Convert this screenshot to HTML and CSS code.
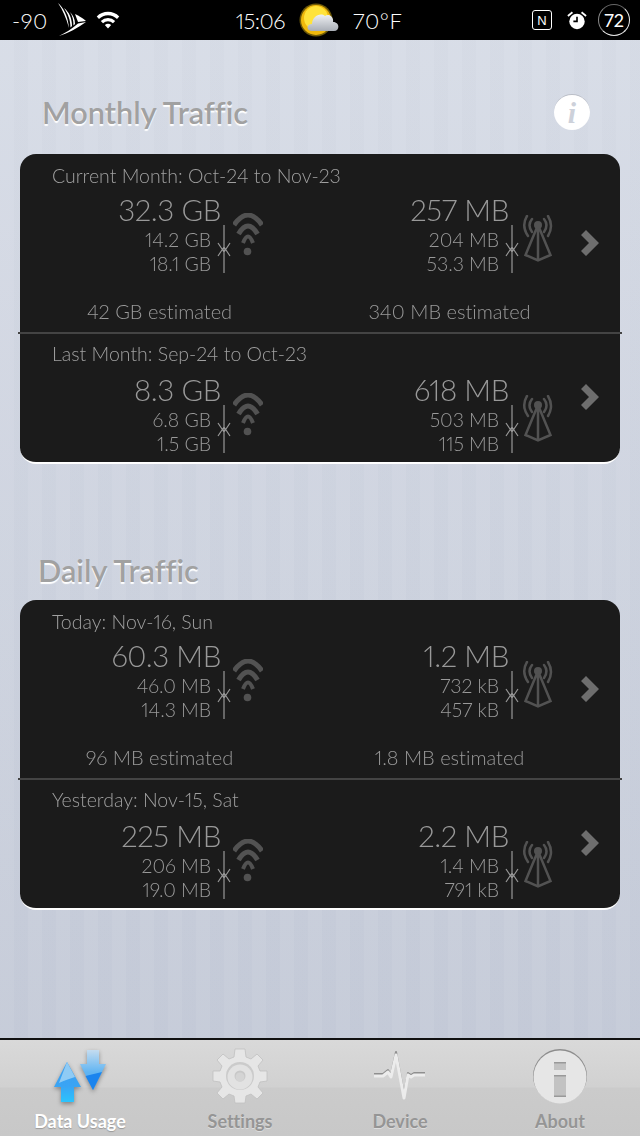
FILE: index.html
```html
<!doctype html>
<html lang="en">
<head>
<title>Data Usage</title>
<meta charset="utf-8">
<link rel="stylesheet" href="styles.css">
</head>
<body>
<svg class="defs" width="0" height="0">
  <symbol id="wifi" viewBox="0 0 30 43">
    <g fill="none" stroke-width="5">
      <path d="M1 12 Q15 -8 29 12"/>
      <path d="M5.500 21 Q15 5 24.500 21"/>
      <path d="M10 30 Q15 17 20 30" stroke-width="4"/>
    </g>
    <circle cx="14.500" cy="38.500" r="3.800" stroke="none"/>
  </symbol>
  <symbol id="tower" viewBox="0 0 31 47">
    <g fill="none" stroke-width="2.500" stroke-linecap="round">
      <path d="M10 4 Q5 10 10 17"/>
      <path d="M22 4 Q27 10 22 17"/>
      <path d="M5 1 Q-1 11 6 21"/>
      <path d="M26 1 Q32 11 26 21"/>
      <path d="M16 10 L3.500 40 L16 45.500 L28.500 40 Z M16 10 V45"/>
    </g>
    <circle cx="16" cy="10" r="4" stroke="none"/>
  </symbol>
  <symbol id="updown" viewBox="0 0 14 48">
    <path d="M7 0 V48 M1 18 L7 27 L13 18 M1 31 L7 22 L13 31" fill="none" stroke-width="1.200"/>
  </symbol>
  <symbol id="chevron" viewBox="0 0 18 26">
    <path d="M0 5 L5 0 L18 13 L5 26 L0 21 L8 13 Z"/>
  </symbol>
</svg>

<div class="status-bar">
  <div class="status-left">
    <span class="signal">-90</span>
    <svg class="sprint" viewBox="0 0 28 34">
      <path d="M0 0 C5 4 10 13 11 25 C8 15 5 7 0 0 Z"/>
      <path d="M6 5 C11 9 14 15 14 23 L12.500 24.500 C12.500 17 10 11 6 5 Z"/>
      <path d="M12 9 C15 12 17 16 17 21 L15.500 22.500 C15.500 17 14.500 13 12 9 Z"/>
      <path d="M17 11 L20 19 L28 18 C25 15 21 13 17 11 Z"/>
      <path d="M28 19 L20 20.500 C14 26 7 30 1 33 C10 30 20 25 28 19 Z"/>
    </svg>
    <svg class="wifi-status" viewBox="0 0 26 20"><path d="M0.500 6 A18 18 0 0 1 25.500 6 L23 9 A14 14 0 0 0 3 9 Z M5 11 A11.500 11.500 0 0 1 21 11 L18.500 13.500 A8 8 0 0 0 7.500 13.500 Z M9.500 15.500 A5.500 5.500 0 0 1 16.500 15.500 L13 19.500 Z"/></svg>
  </div>
  <div class="status-mid">
    <span class="time">15:06</span>
    <svg class="weather" viewBox="0 0 40 34">
      <defs>
        <linearGradient id="cloudFill" x1="0" y1="0" x2="0" y2="1"><stop offset="0" stop-color="#eef0f3"/><stop offset="1" stop-color="#a9aeb6"/></linearGradient>
      </defs>
      <circle cx="17" cy="17" r="16.500" fill="#6e5a08"/>
      <circle cx="17" cy="17" r="15" fill="#f0b90c"/>
      <circle cx="17" cy="15" r="12" fill="#ffe33a"/>
      <path d="M13 28 C7 28 7 21 13 21 C13 14 21 9 26 13 C30 10 35 14 34 19 C41 19 41 28 35 28 Z" fill="url(#cloudFill)"/>
    </svg>
    <span class="temp">70°F</span>
  </div>
  <div class="status-right">
    <span class="nfc">N</span>
    <svg class="alarm" viewBox="0 0 22 20">
      <circle cx="11" cy="11" r="8.500" fill="#fff"/>
      <path d="M1 5 L6 1 M21 5 L16 1" stroke="#fff" stroke-width="2"/>
      <path d="M11 6 V11 H7" fill="none" stroke="#000" stroke-width="1.800"/>
    </svg>
    <span class="battery">72</span>
  </div>
</div>

<main class="content">
  <section class="group group-monthly">
    <div class="group-head">
      <h2>Monthly Traffic</h2>
      <span class="info-btn">i</span>
    </div>
    <div class="card">
      <div class="row">
        <div class="row-title">Current Month: Oct-24 to Nov-23</div>
        <div class="stats">
          <div class="stat stat-wifi">
            <div class="values"><div class="total">32.3 GB</div><div>14.2 GB</div><div>18.1 GB</div></div>
            <svg class="updown"><use href="#updown"/></svg>
            <svg class="net wifi"><use href="#wifi"/></svg>
          </div>
          <div class="stat stat-cell">
            <div class="values"><div class="total">257 MB</div><div>204 MB</div><div>53.3 MB</div></div>
            <svg class="updown"><use href="#updown"/></svg>
            <svg class="net tower"><use href="#tower"/></svg>
          </div>
        </div>
        <div class="estimates"><span>42 GB estimated</span><span>340 MB estimated</span></div>
        <svg class="chevron"><use href="#chevron"/></svg>
      </div>
      <div class="row">
        <div class="row-title">Last Month: Sep-24 to Oct-23</div>
        <div class="stats">
          <div class="stat stat-wifi">
            <div class="values"><div class="total">8.3 GB</div><div>6.8 GB</div><div>1.5 GB</div></div>
            <svg class="updown"><use href="#updown"/></svg>
            <svg class="net wifi"><use href="#wifi"/></svg>
          </div>
          <div class="stat stat-cell">
            <div class="values"><div class="total">618 MB</div><div>503 MB</div><div>115 MB</div></div>
            <svg class="updown"><use href="#updown"/></svg>
            <svg class="net tower"><use href="#tower"/></svg>
          </div>
        </div>
        <svg class="chevron"><use href="#chevron"/></svg>
      </div>
    </div>
  </section>

  <section class="group group-daily">
    <div class="group-head">
      <h2>Daily Traffic</h2>
    </div>
    <div class="card">
      <div class="row">
        <div class="row-title">Today: Nov-16, Sun</div>
        <div class="stats">
          <div class="stat stat-wifi">
            <div class="values"><div class="total">60.3 MB</div><div>46.0 MB</div><div>14.3 MB</div></div>
            <svg class="updown"><use href="#updown"/></svg>
            <svg class="net wifi"><use href="#wifi"/></svg>
          </div>
          <div class="stat stat-cell">
            <div class="values"><div class="total">1.2 MB</div><div>732 kB</div><div>457 kB</div></div>
            <svg class="updown"><use href="#updown"/></svg>
            <svg class="net tower"><use href="#tower"/></svg>
          </div>
        </div>
        <div class="estimates"><span>96 MB estimated</span><span>1.8 MB estimated</span></div>
        <svg class="chevron"><use href="#chevron"/></svg>
      </div>
      <div class="row">
        <div class="row-title">Yesterday: Nov-15, Sat</div>
        <div class="stats">
          <div class="stat stat-wifi">
            <div class="values"><div class="total">225 MB</div><div>206 MB</div><div>19.0 MB</div></div>
            <svg class="updown"><use href="#updown"/></svg>
            <svg class="net wifi"><use href="#wifi"/></svg>
          </div>
          <div class="stat stat-cell">
            <div class="values"><div class="total">2.2 MB</div><div>1.4 MB</div><div>791 kB</div></div>
            <svg class="updown"><use href="#updown"/></svg>
            <svg class="net tower"><use href="#tower"/></svg>
          </div>
        </div>
        <svg class="chevron"><use href="#chevron"/></svg>
      </div>
    </div>
  </section>
</main>

<nav class="tab-bar">
  <div class="tab tab-active">
    <svg class="tab-icon tab-icon-data" viewBox="0 0 56 56">
      <defs>
        <linearGradient id="blueUp" x1="0" y1="0" x2="0" y2="1"><stop offset="0" stop-color="#3d9ff0"/><stop offset=".6" stop-color="#3aa4f4"/><stop offset="1" stop-color="#2cc4fd"/></linearGradient>
        <linearGradient id="blueDown" x1="0" y1="0" x2="0" y2="1"><stop offset="0" stop-color="#c4dcf0"/><stop offset=".55" stop-color="#62b5f2"/><stop offset="1" stop-color="#4aa8f2"/></linearGradient>
      </defs>
      <path d="M15 14 L29 39 H22 V54 H9 V39 H2 Z" fill="url(#blueUp)"/>
      <path d="M15 14 L23 29 C17 31 11 33 7 35 Z" fill="#8fcbf5"/>
      <path d="M35 2 H47 V16 H54 L41 42 L28 16 H35 Z" fill="url(#blueDown)"/>
      <path d="M33.500 28 L50 24 L41 42 Z" fill="#1a84ee"/>
    </svg>
    <span>Data Usage</span>
  </div>
  <div class="tab">
    <svg class="tab-icon" viewBox="0 0 56 56">
      <path fill="#e6e6e6" stroke="#c0c0c0" stroke-width=".8" d="M23 1 H33 L34 9 L39 11 L45 6 L51 12 L46 18 L48 23 L55 23 V33 L48 34 L46 39 L51 45 L45 51 L39 46 L34 48 L33 55 H23 L22 48 L17 46 L11 51 L5 45 L10 39 L8 34 L1 33 V23 L8 23 L10 18 L5 12 L11 6 L17 11 L22 9 Z"/>
      <circle cx="28" cy="28" r="14" fill="#cbcbcb"/>
      <circle cx="28" cy="29" r="12.500" fill="#e2e2e2"/>
      <circle cx="28" cy="28" r="5.500" fill="#c8c8c8"/>
      <circle cx="28" cy="29" r="4.500" fill="#d4d4d4"/>
    </svg>
    <span>Settings</span>
  </div>
  <div class="tab">
    <svg class="tab-icon" viewBox="0 0 56 56">
      <path d="M2 26 H11 L16 22 L19 27 L24 4 L32 47 L36 25 L39 27 L42 25 H53" fill="none" stroke="#8f8f8f" stroke-width="2" stroke-linejoin="round"/>
      <path d="M2 28 H11 L16 24 L19 29 L24 7 L32 50 L36 27 L39 29 L42 27 H53" fill="none" stroke="#ececec" stroke-width="3" stroke-linejoin="round"/>
    </svg>
    <span>Device</span>
  </div>
  <div class="tab">
    <svg class="tab-icon" viewBox="0 0 56 56">
      <circle cx="28" cy="28" r="27" fill="#8d8d8d"/>
      <circle cx="28" cy="29" r="26.500" fill="#e6e6e6"/>
      <rect x="22" y="14" width="12" height="8" fill="#c2c2c2"/>
      <rect x="22" y="27" width="12" height="22" fill="#c2c2c2"/>
      <rect x="22" y="14" width="12" height="1.500" fill="#999"/>
      <rect x="22" y="27" width="12" height="1.500" fill="#999"/>
      <rect x="22" y="47.500" width="12" height="1.500" fill="#999"/>
    </svg>
    <span>About</span>
  </div>
</nav>
</body>
</html>
```

FILE: styles.css
```css
* {
    box-sizing: border-box;
}

html, body {
    height: 100%;
}

body {
    margin: 0;
    width: 640px;
    height: 1136px;
    overflow: hidden;
    display: flex;
    flex-direction: column;
    font-family: Lato, "Open Sans", sans-serif;
    font-weight: 300;
    font-variant-ligatures: none;
    font-variant-numeric: proportional-nums;
    background-color: #d3d8e3;
    background-image:
        repeating-linear-gradient(90deg, rgba(255,255,255,.035) 0 14px, rgba(120,130,150,.015) 14px 28px),
        linear-gradient(180deg, #d8dde7 0%, #c3c9d7 100%);
}

.defs {
    position: absolute;
}

/* status bar */
.status-bar {
    height: 40px;
    flex: none;
    background: #000;
    color: #fff;
    font-size: 22px;
    display: grid;
    grid-template-columns: 1fr auto 1fr;
    align-items: center;
    padding: 0 10px 0 12px;
}

.status-left, .status-mid, .status-right {
    display: flex;
    align-items: center;
}

.status-left {
    gap: 10px;
}

.signal {
    letter-spacing: .5px;
}

.sprint {
    width: 28px;
    height: 34px;
    fill: #fff;
}

.wifi-status {
    width: 24px;
    height: 18px;
    fill: #fff;
}

.status-mid {
    gap: 14px;
    margin-right: 4px;
}

.time {
    letter-spacing: -.5px;
}

.temp {
    letter-spacing: .5px;
}

.weather {
    width: 40px;
    height: 34px;
}

.status-right {
    justify-content: flex-end;
    gap: 11px;
}

.nfc {
    width: 20px;
    height: 20px;
    border: 1px solid #fff;
    border-radius: 3px;
    margin-right: 4px;
    font: 400 13px "Liberation Sans", sans-serif;
    display: flex;
    align-items: center;
    justify-content: center;
}

.alarm {
    width: 20px;
    height: 19px;
}

.battery {
    width: 32px;
    height: 32px;
    border: 1.500px solid #e8e8e8;
    border-top-color: #666;
    border-left-color: #888;
    border-radius: 50%;
    font-size: 18px;
    font-weight: 400;
    display: flex;
    align-items: center;
    justify-content: center;
}

/* content */
.content {
    flex: 1;
    padding: 0 20px;
}

.group-head {
    display: flex;
    align-items: center;
    justify-content: space-between;
    height: 40px;
    padding: 0 30px 0 22px;
}

h2 {
    margin: 0;
    font-size: 30.700px;
    font-weight: 600;
    color: #a1a1a1;
    text-shadow: 0 2px 1px #fff;
}

.group-monthly {
    padding-top: 52px;
}

.group-monthly .card {
    margin-top: 22px;
}

.group-daily {
    padding-top: 86px;
}

.group-daily h2 {
    margin-left: -4px;
}

.group-daily .card {
    margin-top: 10px;
}

.info-btn {
    width: 36px;
    height: 36px;
    border-radius: 50%;
    background: #fff;
    border-top: 1px solid #b9bdc6;
    color: #cdd1da;
    font: italic 700 30px "Liberation Serif", serif;
    display: flex;
    align-items: center;
    justify-content: center;
}

.card {
    background: #1b1b1b;
    border-radius: 16px;
    border-bottom: 2px solid #fff;
    height: 310px;
    color: #a0a0a0;
    will-change: transform;
}

.row {
    padding: 9px 0 0 32px;
    height: 128px;
    position: relative;
}

.row + .row {
    padding-top: 7px;
}

.row + .row .stats {
    margin-top: 5px;
}

.row:first-child {
    height: 180px;
}

.row:first-child::after {
    content: "";
    position: absolute;
    left: -2px;
    right: -2px;
    bottom: 0;
    height: 2px;
    background: #444;
}

.row-title {
    font-size: 19.500px;
    line-height: 26px;
}

.stats {
    display: flex;
    align-items: flex-start;
    height: 92px;
    margin-top: 3px;
}

.stat {
    display: flex;
    align-items: flex-start;
    justify-content: flex-end;
}

.stat-wifi {
    width: 211px;
}

.stat-cell {
    width: 290px;
}

.values {
    text-align: right;
    font-size: 19.500px;
    letter-spacing: -.05px;
    line-height: 24px;
    padding-right: 10px;
    color: #9a9a9a;
}

.total {
    font-size: 29.500px;
    letter-spacing: -.4px;
    line-height: 36px;
    color: #999;
    margin-right: -10px;
}

.updown {
    width: 14px;
    height: 48px;
    margin: 33px 0 0 -4px;
    fill: none;
    stroke: #999;
}

.net {
    fill: #525252;
    stroke: #525252;
}

.wifi {
    width: 30px;
    height: 43px;
    margin: 21px 0 0 2px;
}

.tower {
    width: 31px;
    height: 47px;
    margin: 23px 0 0 3px;
}

.chevron {
    position: absolute;
    right: 21px;
    top: calc(50% - 14px);
    width: 18px;
    height: 26px;
    fill: #6e6e6e;
}

.estimates {
    font-size: 20px;
    line-height: 26px;
    display: grid;
    grid-template-columns: 279px 301px;
    margin: 14px 0 0 -32px;
    text-align: center;
    color: #9a9a9a;
}

/* tab bar */
.tab-bar {
    height: 98px;
    flex: none;
    border-top: 2px solid #111;
    background: linear-gradient(180deg, #d9d9d9 0%, #d1d1d1 49%, #cbcbcb 50%, #c8c8c8 100%);
    display: grid;
    grid-template-columns: repeat(4, 160px);
}

.tab {
    display: flex;
    flex-direction: column;
    align-items: center;
    padding-top: 8px;
    font-size: 18px;
    font-weight: 700;
    color: #959595;
    text-shadow: 0 1px 0 #ddd;
}

.tab-icon {
    width: 56px;
    height: 56px;
    margin-bottom: 6px;
}

.tab-icon-data {
    filter: drop-shadow(0 2px 2px rgba(0,0,0,.35));
}

.tab-active {
    color: #fff;
    text-shadow: 0 1px 1px #999;
}
```
